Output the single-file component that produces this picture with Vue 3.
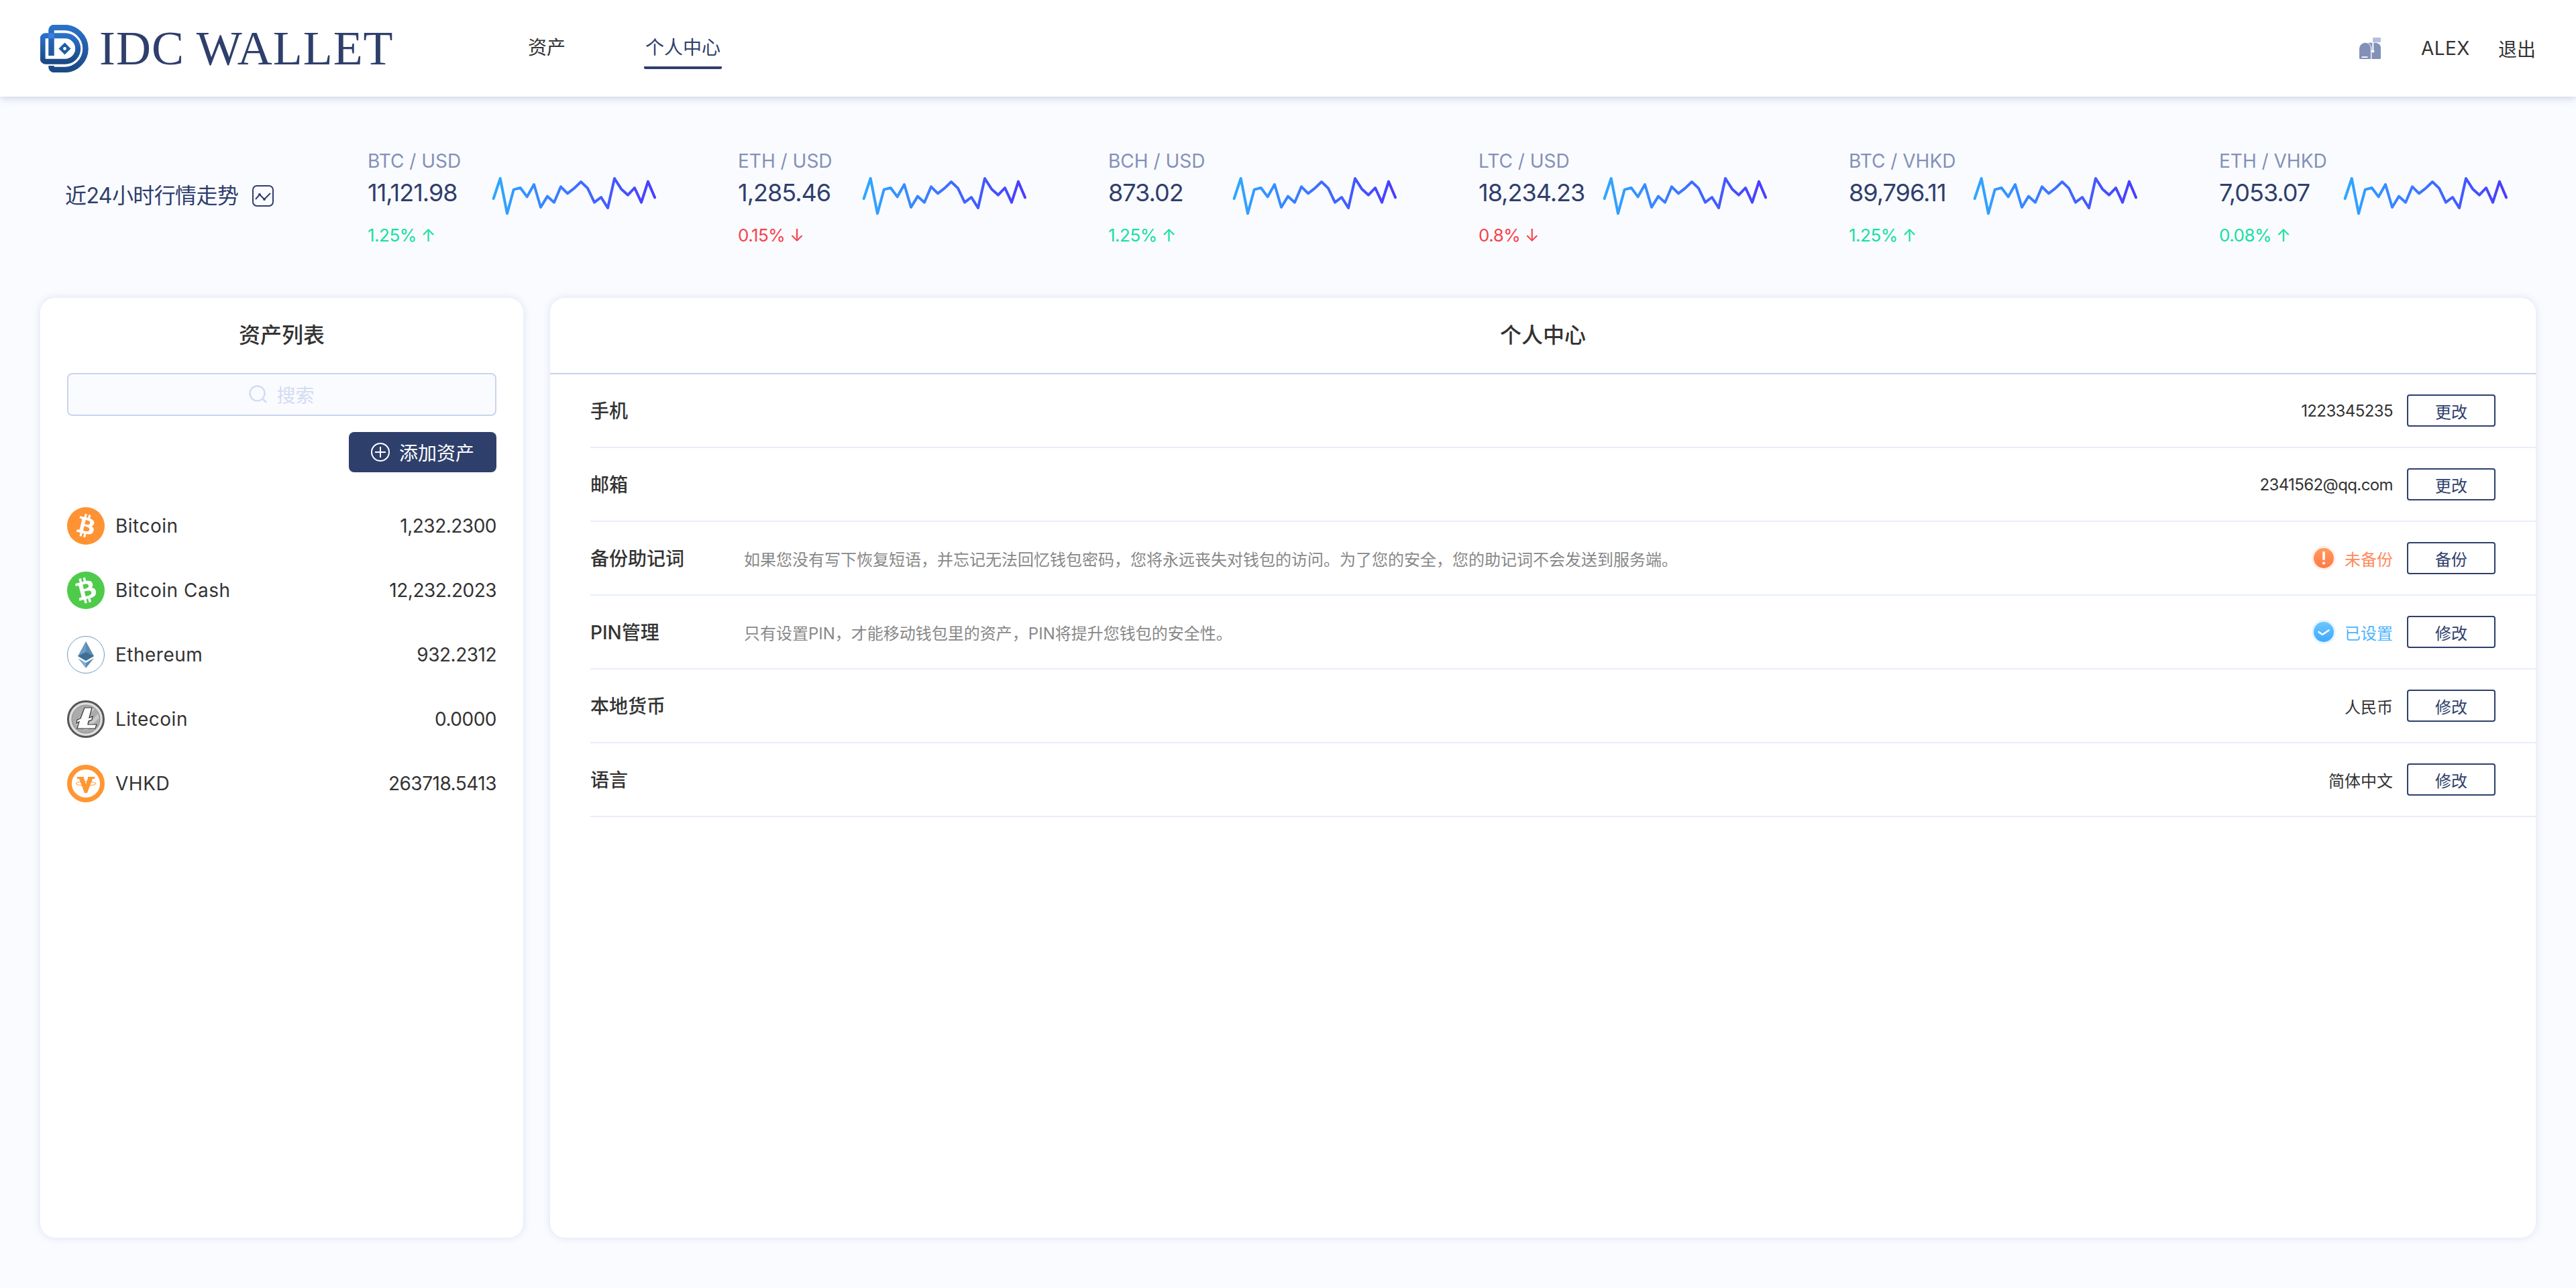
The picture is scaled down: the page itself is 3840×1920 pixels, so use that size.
<script setup>
const tickers = [
  { pair: 'BTC / USD', price: '11,121.98', change: '1.25%', up: true },
  { pair: 'ETH / USD', price: '1,285.46', change: '0.15%', up: false },
  { pair: 'BCH / USD', price: '873.02', change: '1.25%', up: true },
  { pair: 'LTC / USD', price: '18,234.23', change: '0.8%', up: false },
  { pair: 'BTC / VHKD', price: '89,796.11', change: '1.25%', up: true },
  { pair: 'ETH / VHKD', price: '7,053.07', change: '0.08%', up: true },
]

const sparkPoints = '47,138 77,48 108,205 137,98 167,90 197,130 228,75 258,177 288,128 318,155 348,85 378,115 408,92 438,63 468,92 498,155 528,132 558,180 588,48 618,95 648,122 678,90 708,155 738,62 768,133'

const assets = [
  { name: 'Bitcoin', amount: '1,232.2300', icon: 'btc' },
  { name: 'Bitcoin Cash', amount: '12,232.2023', icon: 'bch' },
  { name: 'Ethereum', amount: '932.2312', icon: 'eth' },
  { name: 'Litecoin', amount: '0.0000', icon: 'ltc' },
  { name: 'VHKD', amount: '263718.5413', icon: 'vhkd' },
]

const settings = [
  { label: '手机', value: '1223345235', action: '更改', latin: true },
  { label: '邮箱', value: '2341562@qq.com', action: '更改', latin: true },
  {
    label: '备份助记词',
    desc: '如果您没有写下恢复短语，并忘记无法回忆钱包密码，您将永远丧失对钱包的访问。为了您的安全，您的助记词不会发送到服务端。',
    status: 'warn',
    value: '未备份',
    action: '备份',
  },
  {
    label: 'PIN管理',
    desc: '只有设置PIN，才能移动钱包里的资产，PIN将提升您钱包的安全性。',
    status: 'ok',
    value: '已设置',
    action: '修改',
  },
  { label: '本地货币', value: '人民币', action: '修改' },
  { label: '语言', value: '简体中文', action: '修改' },
]

const bPath = 'M17.288 10.291c.24-1.59-.974-2.45-2.64-3.03l.54-2.153-1.315-.33-.525 2.107c-.345-.087-.705-.167-1.064-.25l.526-2.127-1.32-.33-.54 2.165c-.285-.067-.565-.132-.84-.2l-1.815-.45-.35 1.407s.975.225.955.236c.535.136.63.486.615.766l-1.477 5.92c-.075.166-.24.406-.614.314.015.02-.96-.24-.96-.24l-.66 1.51 1.71.426.93.242-.54 2.19 1.32.327.54-2.17c.36.1.705.19 1.05.273l-.51 2.154 1.32.33.545-2.19c2.24.427 3.93.257 4.64-1.774.57-1.637-.03-2.58-1.217-3.196.854-.193 1.5-.76 1.68-1.93h.01zm-3.01 4.22c-.404 1.64-3.157.75-4.05.53l.72-2.9c.896.23 3.757.67 3.33 2.37zm.41-4.24c-.37 1.49-2.662.735-3.405.55l.654-2.64c.744.18 3.137.524 2.75 2.084v.006z'
</script>

<template>
  <div class="page">
    <header class="topbar">
      <div class="brand">
        <svg class="logo" width="72" height="71" viewBox="0 0 72 71" fill="none">
          <defs>
            <linearGradient id="logoGrad" x1="0" y1="0" x2="0" y2="1">
              <stop offset="0" stop-color="#2a70c8" />
              <stop offset="1" stop-color="#1b4a85" />
            </linearGradient>
          </defs>
          <path d="M16.5 46V8a4 4 0 0 1 4-4H36a31.5 31.5 0 0 1 0 63H20.5a4 4 0 0 1-4-4v-2" stroke="url(#logoGrad)" stroke-width="8.5" />
          <path d="M16 16.3H8a4.4 4.4 0 0 0-4.4 4.4V50a4.7 4.7 0 0 0 4.7 4.7H37a19.2 19.2 0 0 0 0-38.4H16" stroke="url(#logoGrad)" stroke-width="8" />
          <rect x="12.2" y="12.3" width="8.6" height="8" fill="#3b7ddc" />
          <path d="M36.5 26.5l9 9-9 9-9-9z" fill="#1f5ca6" />
          <circle cx="36.5" cy="35.5" r="2.4" fill="#fff" />
        </svg>
        <span class="brand-name">IDC WALLET</span>
      </div>
      <nav class="nav">
        <a class="nav-link">资产</a>
        <a class="nav-link active">个人中心</a>
      </nav>
      <div class="user">
        <svg class="mailbox" width="32" height="32" viewBox="0 0 96 96">
          <rect x="60" y="0" width="36" height="21" rx="4" fill="#b3bfdb" />
          <path d="M0 92V50a27 27 0 0 1 27-27 24 24 0 0 1 24 27v46H4a4 4 0 0 1-4-4z" fill="#8391b8" />
          <path d="M38 23h20v33a6 6 0 1 0 6 0V23h8a24 24 0 0 1 24 27v42a4 4 0 0 1-4 4H55V50a30 30 0 0 0-17-27z" fill="#8391b8" />
          <rect x="10" y="85" width="28" height="5" rx="2.5" fill="#fff" />
        </svg>
        <span class="user-name">ALEX</span>
        <a class="logout">退出</a>
      </div>
    </header>

    <section class="ticker">
      <div class="ticker-title">
        <span>近24小时行情走势</span>
        <svg width="32" height="32" viewBox="0 0 32 32" fill="none">
          <rect x="1" y="1" width="30" height="30" rx="6" stroke="#2f3f6c" stroke-width="2" />
          <path d="M5 21l6-7 7 7 9-9" stroke="#2f3f6c" stroke-width="2" />
          <circle cx="11" cy="14" r="2" fill="#2f3f6c" />
          <circle cx="18" cy="21" r="2" fill="#2f3f6c" />
        </svg>
      </div>
      <div v-for="t in tickers" :key="t.pair" class="ticker-item">
        <div class="pair">{{ t.pair }}</div>
        <div class="price">{{ t.price }}</div>
        <div class="change" :class="t.up ? 'up' : 'down'">{{ t.change }} {{ t.up ? '↑' : '↓' }}</div>
        <svg class="spark" width="270" height="90" viewBox="0 0 810 270" fill="none">
          <defs>
            <linearGradient id="sparkGrad" gradientUnits="userSpaceOnUse" x1="47" y1="0" x2="768" y2="0">
              <stop offset="0" stop-color="#2fa8ff" />
              <stop offset="1" stop-color="#4a3cff" />
            </linearGradient>
          </defs>
          <polyline :points="sparkPoints" stroke="url(#sparkGrad)" stroke-width="12" stroke-linejoin="round" stroke-linecap="round" />
        </svg>
      </div>
    </section>

    <main class="content">
      <aside class="card assets">
        <h2 class="assets-title">资产列表</h2>
        <div class="search">
          <svg width="28" height="28" viewBox="0 0 28 28" fill="none" stroke="#d3dcf2" stroke-width="2.5">
            <circle cx="12.5" cy="12.5" r="11" />
            <path d="M21 21l5 5" />
          </svg>
          <span>搜索</span>
        </div>
        <div class="add-row">
          <button type="button" class="btn-add">
            <svg width="28" height="28" viewBox="0 0 28 28" fill="none" stroke="#fff" stroke-width="2">
              <circle cx="14" cy="14" r="13" />
              <path d="M14 6v16M6 14h16" />
            </svg>
            添加资产
          </button>
        </div>
        <ul class="asset-list">
          <li v-for="a in assets" :key="a.name" class="asset-row">
            <svg v-if="a.icon === 'btc'" width="56" height="56" viewBox="0 0 24 24">
              <circle cx="12" cy="12" r="12" fill="#ff9233" />
              <path :d="bPath" fill="#fff" fill-rule="evenodd" />
            </svg>
            <svg v-else-if="a.icon === 'bch'" width="56" height="56" viewBox="0 0 24 24">
              <circle cx="12" cy="12" r="12" fill="#4ecb4a" />
              <path :d="bPath" fill="#fff" fill-rule="evenodd" transform="rotate(-28 12 12) translate(-1.2 -1.2) scale(1.1)" />
            </svg>
            <svg v-else-if="a.icon === 'eth'" width="56" height="56" viewBox="0 0 56 56">
              <circle cx="28" cy="28" r="27.5" fill="#fff" stroke="#6f9bbd" stroke-width="1" />
              <path d="M28 8L16 30l12 7z" fill="#6c9cc2" />
              <path d="M28 8l12 22-12 7z" fill="#5b8bb3" />
              <path d="M16 30l12-6 12 6-12 7z" fill="#3f6f99" />
              <path d="M16 33l12 7v8z" fill="#7fadd0" />
              <path d="M40 33l-12 7v8z" fill="#5b8bb3" />
            </svg>
            <svg v-else-if="a.icon === 'ltc'" width="56" height="56" viewBox="0 0 56 56">
              <circle cx="28" cy="28" r="26.5" fill="#dedede" stroke="#555" stroke-width="3" />
              <circle cx="28" cy="28" r="21" fill="#ababab" stroke="#8a8a8a" stroke-width="1" />
              <path d="M12 32L36 10l5 3-26 26zM24 44l22-24 2 6-18 18z" fill="#c9c9c9" />
              <path d="M26 11h11l-4 15 5-2-1 5-5 2-1 5h13l-2 6H15l3-10-4 2 1-5 5-2z" fill="#fff" stroke="#333" stroke-width="1.2" />
            </svg>
            <svg v-else width="56" height="56" viewBox="0 0 56 56">
              <circle cx="28" cy="28" r="24.5" fill="#fff" stroke="#ff9633" stroke-width="7" />
              <path d="M15 18h10v2l3 9 3-9v-2h10v3h-3l-8 21h-4l-8-21h-3z" fill="#ff9633" />
              <ellipse cx="28" cy="28" rx="15" ry="3" fill="none" stroke="#ff9633" stroke-width="1" />
            </svg>
            <span class="asset-name">{{ a.name }}</span>
            <span class="asset-amount">{{ a.amount }}</span>
          </li>
        </ul>
      </aside>

      <section class="card profile">
        <h2 class="profile-title">个人中心</h2>
        <div class="rows">
          <div v-for="s in settings" :key="s.label" class="row">
            <span class="row-label">{{ s.label }}</span>
            <span class="row-desc">{{ s.desc }}</span>
            <svg v-if="s.status === 'warn'" class="status-icon" width="36" height="36" viewBox="0 0 36 36">
              <defs>
                <linearGradient id="warnGrad" x1="0" y1="0" x2="0" y2="1">
                  <stop offset="0" stop-color="#ff9a5e" />
                  <stop offset="1" stop-color="#ff7a45" />
                </linearGradient>
              </defs>
              <circle cx="18" cy="18" r="18" fill="#fff0e8" />
              <circle cx="18" cy="18" r="15" fill="url(#warnGrad)" />
              <rect x="16.2" y="8" width="3.6" height="13" rx="1.4" fill="#fff" />
              <circle cx="18" cy="25.5" r="2.1" fill="#fff" />
            </svg>
            <svg v-if="s.status === 'ok'" class="status-icon" width="36" height="36" viewBox="0 0 36 36" fill="none">
              <defs>
                <linearGradient id="okGrad" x1="0" y1="0" x2="0" y2="1">
                  <stop offset="0" stop-color="#6cc6ff" />
                  <stop offset="1" stop-color="#3fa9ff" />
                </linearGradient>
              </defs>
              <circle cx="18" cy="18" r="18" fill="#e4f4ff" />
              <circle cx="18" cy="18" r="15" fill="url(#okGrad)" />
              <path d="M10.5 18l5.5 4 9.5-6.5" stroke="#fff" stroke-width="2.6" stroke-linecap="round" stroke-linejoin="round" />
            </svg>
            <span class="row-value" :class="[s.status, { latin: s.latin }]">{{ s.value }}</span>
            <button type="button" class="btn-outline">{{ s.action }}</button>
          </div>
        </div>
      </section>
    </main>
  </div>
</template>

<style>
html,
body {
  margin: 0;
  background: #fafbff;
}
</style>

<style scoped>
.page {
  width: 3840px;
  height: 1920px;
  display: flex;
  flex-direction: column;
  background: #fafbff;
  color: #333;
  font-family: Inter, "Noto Sans CJK SC", sans-serif;
  overflow: hidden;
}

.topbar {
  flex: 0 0 144px;
  display: flex;
  align-items: center;
  padding: 0 60px;
  background: #fff;
  box-shadow: 0 3px 10px rgba(60, 80, 140, 0.22);
  font-size: 28px;
  position: relative;
}

.brand {
  width: 727px;
  display: flex;
  align-items: center;
  gap: 16px;
}

.brand-name {
  font-family: "Liberation Serif", serif;
  font-size: 72px;
  line-height: 1;
  letter-spacing: 1px;
  color: #2f3f6c;
  white-space: nowrap;
}

.nav {
  display: flex;
  gap: 119px;
  flex: 1;
}

.nav-link {
  padding: 12px 0 10px;
  border-bottom: 4px solid transparent;
  line-height: 36px;
  color: #333;
}

.nav-link.active {
  color: #2f3f6c;
  border-bottom-color: #2f3f6c;
  margin: 0 -2px;
  padding: 12px 2px 10px;
  border-radius: 0 0 2px 2px;
}

.user {
  display: flex;
  align-items: center;
}

.mailbox {
  margin-right: 60px;
}

.user-name {
  margin-right: 42px;
  letter-spacing: 0.5px;
}

.ticker {
  flex: 0 0 300px;
  box-sizing: border-box;
  padding: 78px 0 0 97px;
  display: grid;
  grid-template-columns: 451px repeat(5, 552px) auto;
  align-items: start;
}

.ticker-title {
  display: flex;
  align-items: center;
  gap: 21px;
  font-size: 32px;
  line-height: 44px;
  color: #2f3f6c;
  margin-top: 48px;
  letter-spacing: -0.6px;
}

.ticker-item {
  display: grid;
  grid-template-columns: 172px 270px;
  grid-template-rows: 36px 58px 36px;
}

.pair {
  font-size: 28px;
  line-height: 36px;
  color: #8391b8;
  white-space: nowrap;
}

.price {
  font-size: 36px;
  line-height: 58px;
  letter-spacing: -1px;
  color: #2f3f6c;
  white-space: nowrap;
}

.change {
  font-size: 26px;
  line-height: 36px;
  margin-top: 17px;
  letter-spacing: -0.5px;
  white-space: nowrap;
}

.change.up {
  color: #14e0a0;
}

.change.down {
  color: #f8424a;
}

.spark {
  grid-column: 2;
  grid-row: 1 / span 3;
  margin-top: 28px;
}

.content {
  display: flex;
  gap: 40px;
  padding: 0 60px;
  height: 1401px;
}

.card {
  background: #fff;
  border-radius: 22px;
  box-shadow: 0 0 12px rgba(100, 120, 190, 0.2);
}

.assets {
  flex: 0 0 720px;
  box-sizing: border-box;
  padding: 0 40px;
}

.assets-title {
  margin: 0;
  height: 112px;
  line-height: 112px;
  text-align: center;
  font-size: 32px;
  font-weight: 500;
  color: #333;
}

.search {
  height: 64px;
  box-sizing: border-box;
  border: 2px solid #c9d5ee;
  border-radius: 8px;
  background: #fafbff;
  display: flex;
  align-items: center;
  justify-content: center;
  gap: 13px;
  font-size: 28px;
  color: #d3dcf2;
}

.add-row {
  display: flex;
  justify-content: flex-end;
  margin-top: 24px;
}

.btn-add {
  width: 220px;
  height: 60px;
  border: none;
  border-radius: 8px;
  background: #2f3f6c;
  color: #fff;
  font: inherit;
  font-size: 28px;
  display: flex;
  align-items: center;
  justify-content: center;
  gap: 14px;
  padding: 0;
}

.asset-list {
  list-style: none;
  margin: 32px 0 0;
  padding: 0;
}

.asset-row {
  height: 96px;
  display: flex;
  align-items: center;
  font-size: 28px;
  color: #333;
}

.asset-name {
  margin-left: 16px;
  flex: 1;
  letter-spacing: 0.5px;
}

.asset-amount {
  letter-spacing: -0.5px;
}

.profile {
  flex: 1;
  overflow: hidden;
}

.profile-title {
  margin: 0;
  height: 114px;
  box-sizing: border-box;
  line-height: 112px;
  text-align: center;
  font-size: 32px;
  font-weight: 500;
  color: #333;
  border-bottom: 2px solid #c5d2ea;
}

.rows {
  padding-left: 60px;
}

.row {
  height: 110px;
  box-sizing: border-box;
  padding-right: 60px;
  border-bottom: 2px solid #e8edf8;
  display: flex;
  align-items: center;
}

.row-label {
  flex: 0 0 229px;
  padding-bottom: 3px;
  font-size: 28px;
  font-weight: 500;
  color: #333;
}

.row-desc {
  flex: 1;
  font-size: 24px;
  color: #888;
}

.status-icon {
  margin-right: 13px;
}

.row-value {
  font-size: 24px;
  color: #333;
  margin-right: 21px;
}

.row-value.latin {
  letter-spacing: -0.6px;
}

.row-value.warn {
  color: #ff8a5b;
}

.row-value.ok {
  color: #4db3ff;
}

.btn-outline {
  width: 132px;
  height: 48px;
  box-sizing: border-box;
  border: 2px solid #2f3f6c;
  border-radius: 4px;
  background: #fff;
  color: #2f3f6c;
  font: inherit;
  font-size: 24px;
  padding: 0;
}
</style>
